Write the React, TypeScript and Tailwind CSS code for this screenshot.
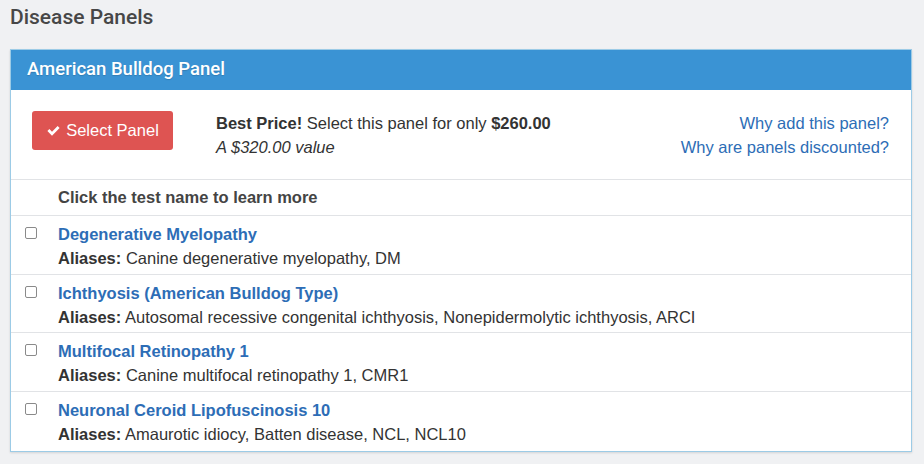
import React from 'react';

type Test = { name: string; aliases: string };

const tests: Test[] = [
  { name: 'Degenerative Myelopathy', aliases: 'Canine degenerative myelopathy, DM' },
  {
    name: 'Ichthyosis (American Bulldog Type)',
    aliases: 'Autosomal recessive congenital ichthyosis, Nonepidermolytic ichthyosis, ARCI',
  },
  { name: 'Multifocal Retinopathy 1', aliases: 'Canine multifocal retinopathy 1, CMR1' },
  { name: 'Neuronal Ceroid Lipofuscinosis 10', aliases: 'Amaurotic idiocy, Batten disease, NCL, NCL10' },
];

const CheckIcon = () => (
  <svg viewBox="0 0 16 16" className="w-[15px] h-[15px]" fill="currentColor">
    <path d="M1.5 8.6l2.1-2.1 2.8 2.8 6-6 2.1 2.1-8.1 8.1z" />
  </svg>
);

export default function App() {
  return (
    <div className="min-h-[464px] w-[924px] bg-[#f0f1f3] px-[10px] pt-[4px] font-['Liberation_Sans',Arial,sans-serif] text-[16.5px] text-[#333]">
      <h2 className="font-['Roboto',sans-serif] font-medium text-[21px] leading-[26px] text-[#474747] h-[45px]">
        Disease Panels
      </h2>

      <div className="w-[902px] border border-[#9ccbe6] bg-white shadow-[0_1px_2px_rgba(0,0,0,0.12)]">
        {/* Header */}
        <div className="h-[40px] bg-[#3a93d4] px-[16px] flex items-center">
          <span className="font-['Roboto',sans-serif] font-medium text-[18.5px] text-white [text-shadow:0_1px_1px_rgba(0,0,0,0.15)]">
            American Bulldog Panel
          </span>
        </div>

        {/* Price row */}
        <div className="flex items-start h-[90px] border-b border-[#e1e3e6] pt-[21px] pl-[21px] pr-[22px]">
          <button className="w-[141px] h-[39px] rounded-[3px] bg-[#de5452] text-white text-[16.5px] flex items-center justify-center gap-[5px]">
            <CheckIcon />
            Select Panel
          </button>
          <div className="ml-[43px] leading-[24px]">
            <div>
              <b>Best Price!</b> Select this panel for only <b>$260.00</b>
            </div>
            <div className="italic">A $320.00 value</div>
          </div>
          <div className="ml-auto text-right leading-[24px] text-[#2d6db6]">
            <div>Why add this panel?</div>
            <div>Why are panels discounted?</div>
          </div>
        </div>

        {/* Column header */}
        <div className="h-[36px] flex items-center pl-[47px] border-b border-[#e1e3e6] font-bold text-[#444]">
          Click the test name to learn more
        </div>

        {tests.map((t, i) => (
          <div
            key={t.name}
            className={`flex h-[58.7px] pt-[6px] ${i < tests.length - 1 ? 'border-b border-[#e1e3e6]' : ''}`}
          >
            <div className="w-[47px] pl-[14px] pt-[5px]">
              <span className="block w-[12px] h-[12px] rounded-[2px] border border-[#8a8a8a] bg-white" />
            </div>
            <div className="leading-[24px]">
              <div className="font-bold text-[#2d6db6]">{t.name}</div>
              <div>
                <b>Aliases:</b> {t.aliases}
              </div>
            </div>
          </div>
        ))}
      </div>
    </div>
  );
}
